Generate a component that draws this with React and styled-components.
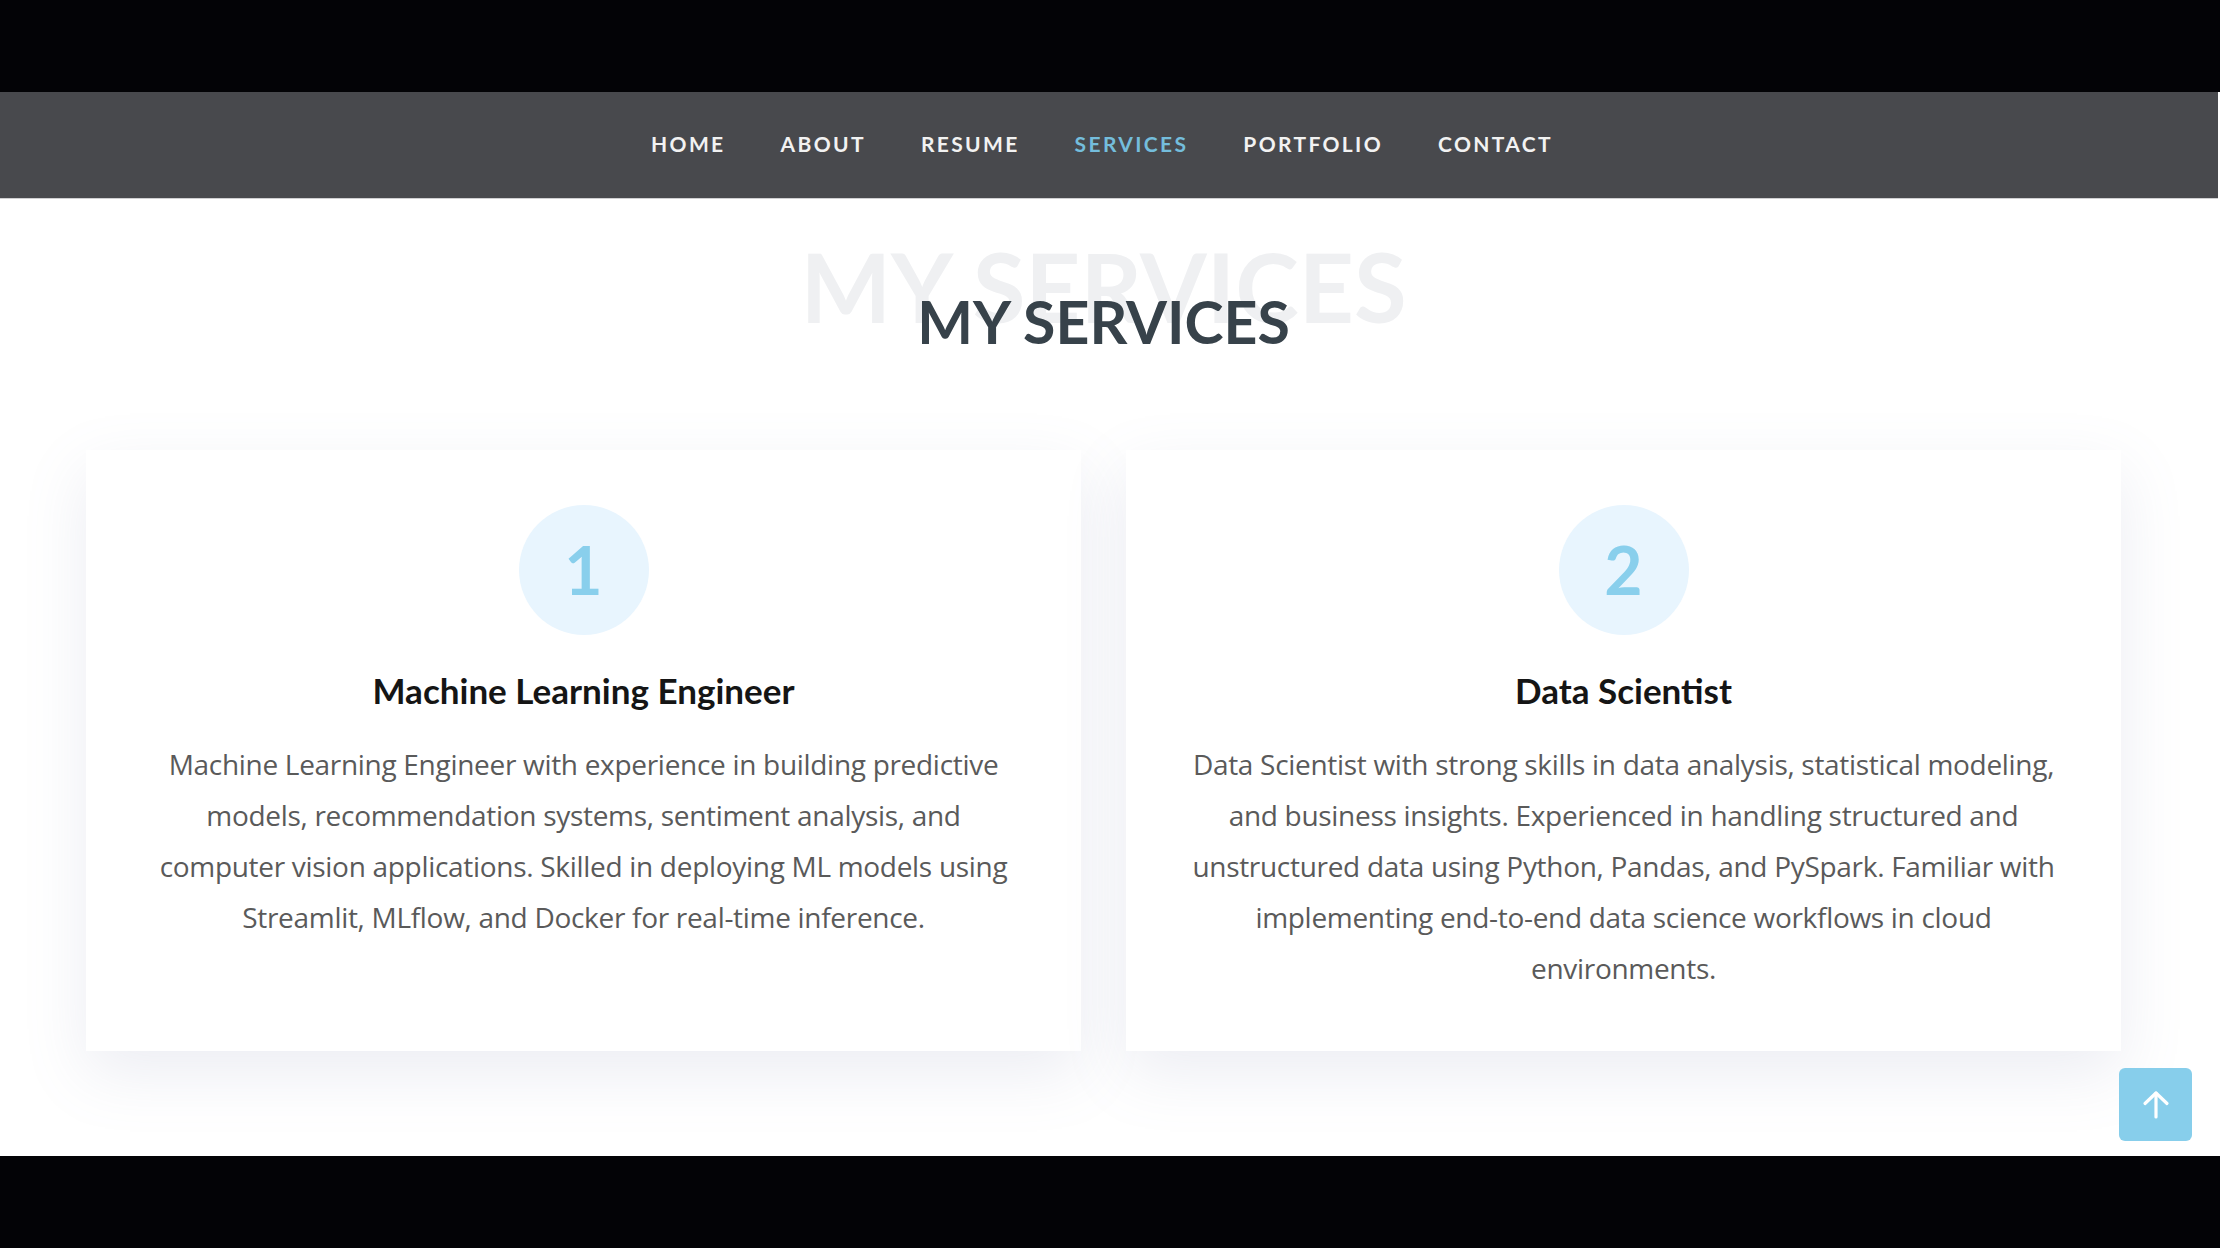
import React from 'react'
import styled, { createGlobalStyle } from 'styled-components'

const GlobalStyle = createGlobalStyle`
    * { box-sizing: border-box; }
    body {
        margin: 0;
        background: #ffffff;
        font-family: Lato, "Open Sans", sans-serif;
    }
`

const Page = styled.div`
    display: flex;
    flex-direction: column;
    width: 100%;
    min-height: 1248px;
    background: #ffffff;
`

const Letterbox = styled.div`
    height: 92px;
    background: #030306;
`

const NavBar = styled.nav`
    height: 107px;
    margin-right: 2px;
    padding-right: 14px;
    background: #48494d;
    border-bottom: 1px solid #cfcfd1;
    display: flex;
    align-items: center;
    justify-content: center;
`

const NavList = styled.ul`
    display: flex;
    gap: 55px;
    margin: 0 0 4px;
    padding: 0;
    list-style: none;
`

const NavItem = styled.li`
    font-family: Lato, sans-serif;
    font-weight: 700;
    font-size: 21px;
    letter-spacing: 2.35px;
    text-transform: uppercase;
    color: ${p => (p.$active ? '#74bddc' : '#f2f2f2')};
`

const Services = styled.section`
    position: relative;
    height: 957px;
    padding: 88px 99px 0 86px;
`

const TitleWrap = styled.div`
    position: relative;
    display: flex;
    justify-content: center;
`

const Ghost = styled.span`
    position: absolute;
    top: -49px;
    left: 50%;
    transform: translateX(-50%);
    font-family: Lato, sans-serif;
    font-weight: 700;
    font-size: 96px;
    line-height: 1;
    white-space: nowrap;
    color: #eff0f2;
`

const Title = styled.h2`
    position: relative;
    margin: 0;
    font-family: Lato, sans-serif;
    font-weight: 700;
    font-size: 59px;
    line-height: 1.2;
    color: #37424a;
`

const Cards = styled.div`
    display: grid;
    grid-template-columns: 1fr 1fr;
    gap: 45px;
    margin-top: 92px;
`

const Card = styled.div`
    display: flex;
    flex-direction: column;
    align-items: center;
    padding: 55px 62px 57px;
    background: #ffffff;
    box-shadow: 0 22px 60px rgba(120, 130, 170, 0.14);
`

const Badge = styled.div`
    width: 130px;
    height: 130px;
    border-radius: 50%;
    background: #e8f5fe;
    display: flex;
    align-items: center;
    justify-content: center;
    font-family: Lato, sans-serif;
    font-weight: 700;
    font-size: 66px;
    color: #89cfec;
`

const CardTitle = styled.h3`
    margin: 34px 0 0;
    font-family: Lato, sans-serif;
    font-weight: 700;
    font-size: 35px;
    line-height: 1.2;
    color: #151515;
`

const CardText = styled.p`
    margin: 28px 0 0;
    font-family: "Open Sans", sans-serif;
    font-size: 28px;
    line-height: 51px;
    letter-spacing: -0.3px;
    text-align: center;
    color: #5a5a5a;
`

const TopButton = styled.button`
    position: absolute;
    right: 28px;
    bottom: 15px;
    width: 73px;
    height: 73px;
    border: none;
    border-radius: 6px;
    background: #87ceeb;
    display: flex;
    align-items: center;
    justify-content: center;
    padding: 0;
`

const navItems = ['Home', 'About', 'Resume', 'Services', 'Portfolio', 'Contact']

const services = [
    {
        num: 1,
        title: 'Machine Learning Engineer',
        text: 'Machine Learning Engineer with experience in building predictive models, recommendation systems, sentiment analysis, and computer vision applications. Skilled in deploying ML models using Streamlit, MLflow, and Docker for real-time inference.',
    },
    {
        num: 2,
        title: 'Data Scientist',
        text: 'Data Scientist with strong skills in data analysis, statistical modeling, and business insights. Experienced in handling structured and unstructured data using Python, Pandas, and PySpark. Familiar with implementing end-to-end data science workflows in cloud environments.',
    },
]

const ArrowUp = () => (
    <svg width="30" height="30" viewBox="0 0 30 30" fill="none" stroke="#fff" strokeWidth="3.2" strokeLinecap="round" strokeLinejoin="round">
        <path d="M15 27V3" />
        <path d="M4 13.5L15 3l11 10.5" />
    </svg>
)

const App = () => {
    return (
        <Page>
            <GlobalStyle />
            <Letterbox />
            <NavBar>
                <NavList>
                    {navItems.map(item => (
                        <NavItem key={item} $active={item === 'Services'}>{item}</NavItem>
                    ))}
                </NavList>
            </NavBar>
            <Services>
                <TitleWrap>
                    <Ghost>MY SERVICES</Ghost>
                    <Title>MY SERVICES</Title>
                </TitleWrap>
                <Cards>
                    {services.map(s => (
                        <Card key={s.num}>
                            <Badge>{s.num}</Badge>
                            <CardTitle>{s.title}</CardTitle>
                            <CardText>{s.text}</CardText>
                        </Card>
                    ))}
                </Cards>
                <TopButton aria-label="Back to top">
                    <ArrowUp />
                </TopButton>
            </Services>
            <Letterbox />
        </Page>
    )
}

export default App
